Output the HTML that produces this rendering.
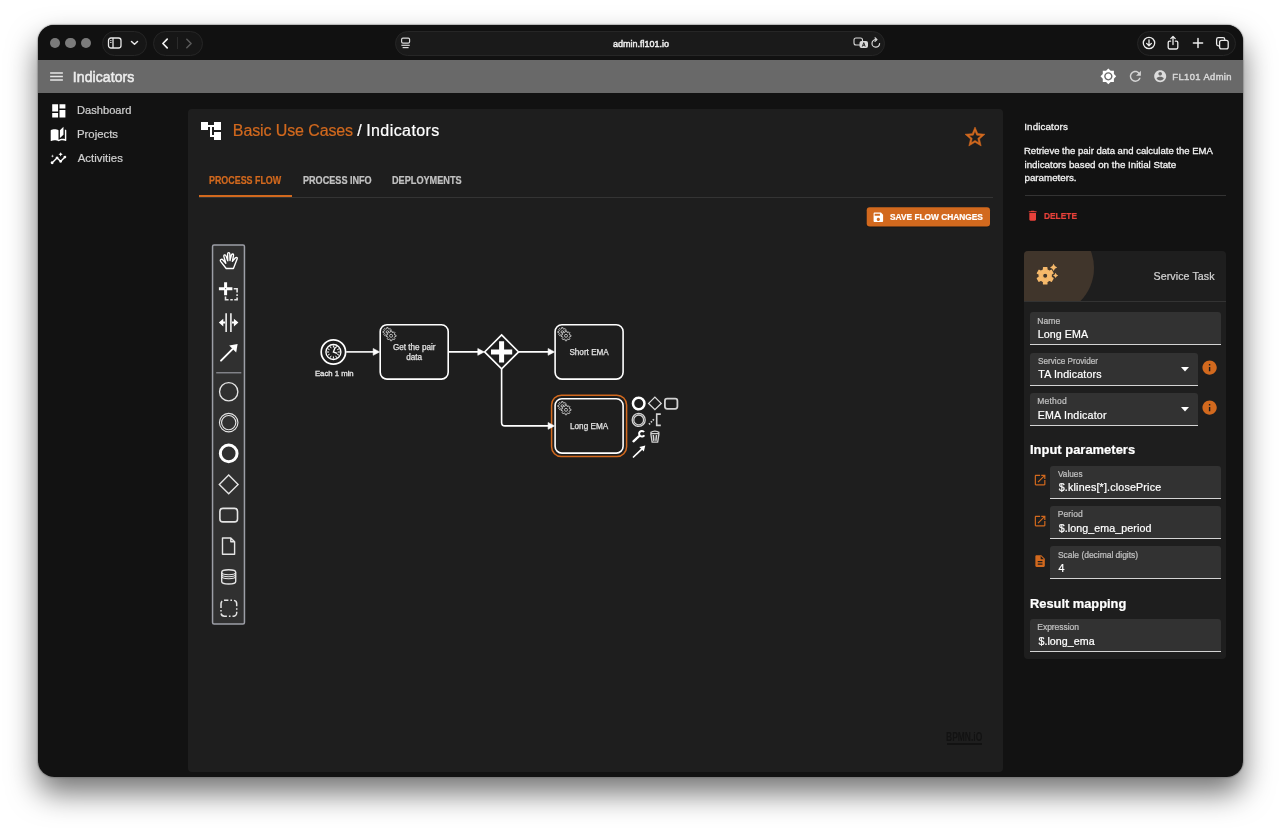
<!DOCTYPE html>
<html lang="en"><head><meta charset="utf-8"><title>Indicators</title>
<style>
html,body{margin:0;padding:0;background:#fff;}
body{width:1280px;height:828px;overflow:hidden;position:relative;font-family:"Liberation Sans",Arial,sans-serif;}
.t{position:absolute;white-space:nowrap;display:block;}
.i{position:absolute;display:block;overflow:visible;}
.b{position:absolute;box-sizing:border-box;}
#win{position:absolute;left:37.6px;top:25.3px;width:1205px;height:751.8px;border-radius:16px;background:#121212;overflow:hidden;}
#shadow{position:absolute;left:37.6px;top:25.3px;width:1205px;height:751.8px;border-radius:16px;box-shadow:0 0 0 0.6px rgba(150,150,150,.5),0 16px 30px rgba(0,0,0,.55),0 0 2px rgba(0,0,0,.6);}
#abs{position:absolute;left:0;top:0;width:1280px;height:828px;will-change:transform;}
</style></head><body>
<div id="shadow"></div>
<div id="win">
<div class="b" style="left:0;top:0;width:1206px;height:34.7px;background:#111111"></div>
<div class="b" style="left:0;top:34.7px;width:1206px;height:33px;background:#696969"></div>
</div>
<div id="abs">

<div class="b" style="left:49.8px;top:37.8px;width:10.4px;height:10.4px;border-radius:50%;background:#7b7b7b"></div>
<div class="b" style="left:65.3px;top:37.8px;width:10.4px;height:10.4px;border-radius:50%;background:#7b7b7b"></div>
<div class="b" style="left:80.8px;top:37.8px;width:10.4px;height:10.4px;border-radius:50%;background:#7b7b7b"></div>
<div class="b" style="left:102px;top:31px;width:45px;height:24.5px;border-radius:12.5px;background:#161616;border:1px solid #262626;"></div>
<div class="b" style="left:152.5px;top:31px;width:50px;height:24.5px;border-radius:12.5px;background:#161616;border:1px solid #262626;"></div>
<div class="b" style="left:395px;top:31px;width:489.8px;height:24.5px;border-radius:12.5px;background:#161616;border:1px solid #262626;background:#1a1a1a"></div>
<div class="b" style="left:1137px;top:31px;width:99px;height:24.5px;border-radius:12.5px;background:#161616;border:1px solid #262626;"></div>
<svg class="i" style="left:107.2px;top:36px" width="16" height="14" viewBox="0 0 16 14" fill="none" stroke="#e8e8e8" stroke-width="1.3"><rect x="1.5" y="2" width="12.5" height="10" rx="2.5"/><line x1="6" y1="2" x2="6" y2="12"/><line x1="3.2" y1="4.6" x2="4.5" y2="4.6" stroke-width="1"/><line x1="3.2" y1="6.5" x2="4.5" y2="6.5" stroke-width="1"/></svg>
<svg class="i" style="left:130px;top:40.4px" width="9" height="6" viewBox="0 0 9 6" fill="none" stroke="#e8e8e8" stroke-width="1.5" stroke-linecap="round" stroke-linejoin="round"><path d="M1.5 1.5 L4.5 4.3 L7.5 1.5"/></svg>
<svg class="i" style="left:160px;top:36.5px" width="10" height="13" viewBox="0 0 10 13" fill="none" stroke="#f2f2f2" stroke-width="1.7" stroke-linecap="round" stroke-linejoin="round"><path d="M7.2 2.200 L2.900 6.500 L7.200 10.800"/></svg>
<div class="b" style="left:177px;top:37px;width:1px;height:12px;background:#2c2c2c"></div>
<svg class="i" style="left:184px;top:36.5px" width="10" height="13" viewBox="0 0 10 13" fill="none" stroke="#5a5a5a" stroke-width="1.5" stroke-linecap="round" stroke-linejoin="round"><path d="M2.800 2.200 L7.100 6.500 L2.800 10.800"/></svg>
<svg class="i" style="left:400px;top:37px" width="12" height="12" viewBox="0 0 12 12" fill="none" stroke="#d8d8d8" stroke-width="1.2"><rect x="1.6" y="1.2" width="8" height="5" rx="1.4"/><line x1="1.4" y1="8.3" x2="9.8" y2="8.3"/><line x1="2.6" y1="10.6" x2="8.6" y2="10.6"/></svg>
<span class="t" style="left:612.77px;top:38px;font-size:9.6px;line-height:11px;color:#f0f0f0;transform:scaleX(0.9396);transform-origin:0 0;-webkit-text-stroke:0.45px #f0f0f0;">admin.fl101.io</span>
<svg class="i" style="left:853px;top:37px" width="16" height="12" viewBox="0 0 16 12"><rect x="1" y="1" width="8.5" height="7" rx="2" fill="none" stroke="#d8d8d8" stroke-width="1.1"/><rect x="6.5" y="4" width="8.5" height="7" rx="2" fill="#d8d8d8"/><path d="M9.300 9.600 L10.750 5.600 L12.200 9.600 M9.900 8.300 H11.600" fill="none" stroke="#1a1a1a" stroke-width="0.9"/></svg>
<svg class="i" style="left:869.6px;top:37px" width="12" height="12" viewBox="0 0 12 12" fill="none" stroke="#d8d8d8" stroke-width="1.2" stroke-linecap="round"><path d="M9.6 6.6 A3.8 3.8 0 1 1 6 2.6"/><path d="M5 0.8 L7 2.6 L5 4.4" stroke-linejoin="round"/></svg>
<svg class="i" style="left:1141.9px;top:36px" width="14" height="14" viewBox="0 0 14 14" fill="none" stroke="#ececec" stroke-width="1.3" stroke-linecap="round" stroke-linejoin="round"><circle cx="7" cy="7" r="5.7"/><path d="M7 3.8 V9.6 M4.6 7.4 L7 9.8 L9.4 7.4"/></svg>
<svg class="i" style="left:1165.7px;top:34.5px" width="14" height="16" viewBox="0 0 14 16" fill="none" stroke="#ececec" stroke-width="1.3" stroke-linecap="round" stroke-linejoin="round"><path d="M4.6 6.2 H3.6 Q2.2 6.2 2.2 7.6 V12.6 Q2.2 14 3.6 14 H10.4 Q11.800 14 11.8 12.6 V7.6 Q11.8 6.2 10.4 6.2 H9.4"/><path d="M7 9.6 V1.600 M4.800 3.600 L7 1.400 L9.200 3.600"/></svg>
<svg class="i" style="left:1192px;top:37px" width="12" height="12" viewBox="0 0 12 12" fill="none" stroke="#ececec" stroke-width="1.5" stroke-linecap="round"><path d="M6 1.400 V10.600 M1.400 6 H10.600"/></svg>
<svg class="i" style="left:1215px;top:36px" width="15" height="14" viewBox="0 0 15 14" fill="none" stroke="#ececec" stroke-width="1.3"><path d="M4.200 9.800 H3.400 Q1.600 9.800 1.600 8 V3.400 Q1.600 1.600 3.400 1.600 H8 Q9.800 1.600 9.800 3.400 V4.200"/><rect x="4.600" y="4.400" width="8.600" height="8.400" rx="1.900"/></svg>
<svg class="i" style="left:47.9px;top:67.85px" width="17" height="17" viewBox="0 0 24 24" fill="#e6e6e6" ><path d="M3 18h18v-2H3v2zm0-5h18v-2H3v2zm0-7v2h18V6H3z"/></svg>
<span class="t" style="left:72.86px;top:69px;font-size:14px;line-height:16px;color:#ececec;letter-spacing:0.078px;-webkit-text-stroke:0.55px #ececec;">Indicators</span>
<svg class="i" style="left:1099.55px;top:68.15px" width="16.7" height="16.7" viewBox="0 0 24 24" fill="#ffffff" ><path d="M20 8.690V4h-4.690L12 .690 8.690 4H4v4.690L.690 12 4 15.310V20h4.690L12 23.310 15.310 20H20v-4.690L23.310 12 20 8.690zM12 18c-3.310 0-6-2.690-6-6s2.690-6 6-6 6 2.690 6 6-2.690 6-6 6zm0-10c-2.210 0-4 1.790-4 4s1.790 4 4 4 4-1.790 4-4-1.790-4-4-4z"/></svg>
<svg class="i" style="left:1126.65px;top:68.05px" width="16.7" height="16.7" viewBox="0 0 24 24" fill="#d4d4d4" ><path d="M17.650 6.350C16.200 4.900 14.210 4 12 4c-4.420 0-7.990 3.580-7.990 8s3.570 8 7.990 8c3.730 0 6.840-2.550 7.730-6h-2.080c-.82 2.330-3.040 4-5.650 4-3.310 0-6-2.690-6-6s2.690-6 6-6c1.660 0 3.140.69 4.220 1.780L13 11h7V4l-2.350 2.350z"/></svg>
<svg class="i" style="left:1153px;top:69.3px" width="14.4" height="14.4" viewBox="0 0 24 24" fill="#dcdcdc" ><path d="M12 2C6.480 2 2 6.480 2 12s4.480 10 10 10 10-4.480 10-10S17.520 2 12 2zm0 3c1.660 0 3 1.340 3 3s-1.340 3-3 3-3-1.340-3-3 1.340-3 3-3zm0 14.200c-2.500 0-4.710-1.280-6-3.220.03-1.990 4-3.080 6-3.080 1.990 0 5.970 1.090 6 3.080-1.290 1.940-3.500 3.220-6 3.220z"/></svg>
<span class="t" style="left:1172.28px;top:71px;font-size:9.4px;line-height:11px;color:#d8d8d8;letter-spacing:0.407px;-webkit-text-stroke:0.45px #d8d8d8;">FL101 Admin</span>
<svg class="i" style="left:49.75px;top:101.65px" width="17.6" height="17.6" viewBox="0 0 24 24" fill="#ffffff" ><path d="M3 13h8V3H3v10zm0 8h8v-6H3v6zm10 0h8V11h-8v10zm0-18v6h8V3h-8z"/></svg>
<span class="t" style="left:76.94px;top:104px;font-size:11.4px;line-height:12px;color:#cfcfcf;transform:scaleX(0.9760);transform-origin:0 0;-webkit-text-stroke:0.22px #cfcfcf;">Dashboard</span>
<svg class="i" style="left:50.1px;top:126.4px" width="17" height="17" viewBox="0 0 24 24" fill="#ffffff" ><path d="M19 1l-5 5v11l5-4.500V1zM1 6v14.650c0 .250.250.500.500.500.100 0 .150-.050.250-.050C3.100 20.450 5.050 20 6.500 20c1.950 0 4.050.400 5.500 1.500V6c-1.450-1.100-3.550-1.500-5.500-1.500S2.450 4.900 1 6zm22 13.500V6c-.600-.450-1.250-.750-2-1v13.500c-1.100-.350-2.300-.500-3.500-.500-1.700 0-4.150.650-5.500 1.500v2c1.350-.850 3.800-1.500 5.500-1.500 1.650 0 3.350.300 4.750 1.050.100.050.150.050.250.050.250 0 .500-.250.500-.500v-1.100z"/></svg>
<span class="t" style="left:76.91px;top:128px;font-size:11.4px;line-height:12px;color:#cfcfcf;-webkit-text-stroke:0.22px #cfcfcf;">Projects</span>
<svg class="i" style="left:50.3px;top:150.2px" width="17" height="17" viewBox="0 0 24 24" fill="#ffffff" ><path d="M21 8c-1.450 0-2.260 1.440-1.930 2.510l-3.550 3.560c-.3-.09-.74-.09-1.040 0l-2.550-2.550C12.270 10.450 11.460 9 10 9c-1.450 0-2.270 1.440-1.930 2.520l-4.560 4.550C2.440 15.740 1 16.550 1 18c0 1.100.9 2 2 2 1.450 0 2.260-1.440 1.930-2.510l4.550-4.560c.3.090.74.090 1.040 0l2.550 2.550C12.730 16.550 13.540 18 15 18c1.450 0 2.270-1.440 1.930-2.520l3.560-3.550C21.560 12.260 23 11.450 23 10c0-1.100-.9-2-2-2z"/><path d="M15 9l.94-2.070L18 6l-2.060-.93L15 3l-.92 2.070L12 6l2.080.93z"/><path d="M3.500 11L4 9l2-.5L4 8l-.5-2L3 8l-2 .5L3 9z"/></svg>
<span class="t" style="left:77.63px;top:152px;font-size:11.4px;line-height:12px;color:#cfcfcf;letter-spacing:0.040px;-webkit-text-stroke:0.22px #cfcfcf;">Activities</span>
<div class="b" style="left:188px;top:109px;width:815px;height:663px;border-radius:4px;background:#1e1e1e"></div>
<svg class="i" style="left:199px;top:119px" width="24" height="24" viewBox="0 0 24 24" fill="#ffffff" ><path d="M22 11V3h-7v3H9V3H2v8h7V8h2v10h4v3h7v-8h-7v3h-2V8h2v3z"/></svg>
<span class="t" style="left:232.84px;top:122px;font-size:16px;line-height:17px;color:#d2691e;letter-spacing:-0.109px;-webkit-text-stroke:0.22px #d2691e;">Basic Use Cases</span>
<span class="t" style="left:357.25px;top:122px;font-size:16px;line-height:17px;color:#ffffff;-webkit-text-stroke:0.22px #ffffff;">/</span>
<span class="t" style="left:366.17px;top:122px;font-size:16px;line-height:17px;color:#ffffff;letter-spacing:0.421px;-webkit-text-stroke:0.22px #ffffff;">Indicators</span>
<svg class="i" style="left:963.2px;top:125px" width="24" height="24" viewBox="0 0 24 24" fill="#d2691e" stroke="#d2691e" stroke-width="0.5"><path d="M22 9.24l-7.19-.62L12 2 9.19 8.63 2 9.24l5.46 4.73L5.82 21 12 17.27 18.18 21l-1.63-7.03L22 9.24zM12 15.4l-3.76 2.27 1-4.28-3.32-2.88 4.38-.38L12 6.1l1.710 4.040 4.380.380-3.320 2.880 1 4.280L12 15.400z"/></svg>
<span class="t" style="left:209.25px;top:175px;font-size:10.3px;line-height:11px;color:#d2691e;font-weight:700;transform:scaleX(0.8642);transform-origin:0 0;-webkit-text-stroke:0.22px #d2691e;">PROCESS FLOW</span>
<span class="t" style="left:302.54px;top:175px;font-size:10.3px;line-height:11px;color:#c2c2c2;font-weight:700;transform:scaleX(0.8825);transform-origin:0 0;-webkit-text-stroke:0.22px #c2c2c2;">PROCESS INFO</span>
<span class="t" style="left:391.64px;top:175px;font-size:10.3px;line-height:11px;color:#c2c2c2;font-weight:700;transform:scaleX(0.8886);transform-origin:0 0;-webkit-text-stroke:0.22px #c2c2c2;">DEPLOYMENTS</span>
<div class="b" style="left:199px;top:196.500px;width:793.500px;height:1px;background:#343434"></div>
<div class="b" style="left:199px;top:195.300px;width:93.300px;height:2px;background:#d2691e"></div>
<svg class="i" style="left:860px;top:200px" width="140" height="34" viewBox="860 200 140 34"><rect x="866.7" y="207.8" width="123.3" height="19.4" rx="3" fill="#0c0c0c" opacity=".55"/><rect x="866.7" y="207.3" width="123.3" height="19.2" rx="3" fill="#d2691e"/></svg>
<svg class="i" style="left:872.35px;top:210.7px" width="12.7" height="12.7" viewBox="0 0 24 24" fill="#ffffff" ><path d="M17 3H5c-1.110 0-2 .9-2 2v14c0 1.100.89 2 2 2h14c1.100 0 2-.9 2-2V7l-4-4zm-5 16c-1.660 0-3-1.340-3-3s1.340-3 3-3 3 1.340 3 3-1.340 3-3 3zm3-10H5V5h10v4z"/></svg>
<span class="t" style="left:889.91px;top:212px;font-size:9.3px;line-height:10px;color:#ffffff;font-weight:700;transform:scaleX(0.8965);transform-origin:0 0;-webkit-text-stroke:0.22px #ffffff;">SAVE FLOW CHANGES</span>
<span class="t" style="left:946.48px;top:729px;font-size:13.5px;line-height:15px;color:#121212;font-weight:700;transform:scaleX(0.6290);transform-origin:0 0;">BPMN.iO</span>
<div class="b" style="left:946.7px;top:743.2px;width:35.4px;height:1.6px;background:#121212"></div>
<svg class="i" style="left:0;top:0" width="1280" height="828" viewBox="0 0 1280 828"><rect x="212.55" y="244.95" width="31.9" height="379" rx="1.5" fill="#303030" stroke="#9c9ea6" stroke-width="1.5"/><path d="M216.2 372.8 H241.3" stroke="#9c9ea6" stroke-width="1.1" fill="none"/><path fill="none" stroke="#ffffff" stroke-width="1.35" stroke-linejoin="round" stroke-linecap="round" d="M226.200 268.500 L220.800 261.600 Q219.800 260.200 220.900 259.500 Q222 258.900 223 260 L225.800 263.200 L223.900 256.600 Q223.600 255.200 224.600 254.900 Q225.700 254.700 226.100 256 L227.800 260.800 L227.600 254 Q227.600 252.600 228.700 252.600 Q229.800 252.600 229.800 254 L230 260.600 L231.400 255 Q231.800 253.700 232.800 254 Q233.800 254.300 233.500 255.700 L232.400 261.400 L235.200 258 Q236.100 257 236.900 257.600 Q237.600 258.300 236.900 259.500 L233.400 268.500 Z"/><path d="M225.6 282.2 V295.300 M218.900 288.700 H232.400" stroke="#ffffff" stroke-width="3" fill="none"/><rect x="225.1" y="288.2" width="1" height="1" fill="#444"/><path d="M233.700 288.700 H237.100 V292.400 M237.100 294.300 V296 M237.100 297.400 V299.700 H234.300 M232.800 299.700 H230.300 M228.600 299.700 H225.500 V296.400" stroke="#e4e4e4" stroke-width="1.6" fill="none"/><path d="M226.150 313.200 V332 M230.900 313.200 V332" stroke="#e4e4e4" stroke-width="1.7" fill="none"/><path fill="#ffffff" d="M218.800 322.600 L223.300 318.700 V321.600 H225.200 V323.600 H223.300 V326.500 Z M238.400 322.600 L233.900 318.700 V321.600 H232 V323.600 H233.900 V326.500 Z"/><path d="M221 360.700 L232.500 349.200" stroke="#ffffff" stroke-width="1.9" stroke-linecap="round" fill="none"/><path fill="#ffffff" d="M237.600 344.100 L236.200 352.600 L229.200 345.600 Z"/><circle cx="228.7" cy="391.750" r="9.150" fill="none" stroke="#e4e4e4" stroke-width="1.35"/><circle cx="228.7" cy="422.600" r="9.250" fill="none" stroke="#e4e4e4" stroke-width="1.15"/><circle cx="228.7" cy="422.600" r="7.150" fill="none" stroke="#e4e4e4" stroke-width="1.15"/><circle cx="228.7" cy="453.400" r="8.350" fill="none" stroke="#ffffff" stroke-width="3"/><path d="M228.7 475 L238.1 484.400 L228.7 493.800 L219.29999999999998 484.400 Z" fill="none" stroke="#e4e4e4" stroke-width="1.4"/><rect x="219.900" y="508.400" width="17.600" height="13.500" rx="3" fill="none" stroke="#e4e4e4" stroke-width="1.6"/><path d="M222.500 538 H230.800 L234.600 541.800 V554.300 H222.500 Z M230.800 538 V541.800 H234.600" fill="none" stroke="#e4e4e4" stroke-width="1.4" stroke-linejoin="round"/><path d="M221.700 572.300 Q221.700 569.800 228.700 569.800 Q235.700 569.800 235.700 572.300 V581.500 Q235.700 584 228.700 584 Q221.700 584 221.700 581.500 Z" fill="none" stroke="#e4e4e4" stroke-width="1.4"/><path d="M221.700 572.300 Q221.700 574.800 228.700 574.800 Q235.700 574.800 235.700 572.300 M221.700 574.300 Q221.700 576.800 228.700 576.800 Q235.700 576.800 235.700 574.300 M221.700 576.300 Q221.700 578.800 228.700 578.800 Q235.700 578.800 235.700 576.300" fill="none" stroke="#e4e4e4" stroke-width="1.1"/><rect x="221" y="600.300" width="15.700" height="15.900" rx="3.400" fill="none" stroke="#e4e4e4" stroke-width="1.5" stroke-dasharray="7 2 1.600 2" stroke-dashoffset="3"/></svg>
<svg class="i" style="left:0;top:0" width="1280" height="828" viewBox="0 0 1280 828" font-family="Liberation Sans, Arial, sans-serif"><circle cx="333.4" cy="352" r="12.2" fill="#1e1e1e" stroke="#ffffff" stroke-width="1.7"/><circle cx="333.4" cy="352" r="7.5" fill="#1e1e1e" stroke="#ffffff" stroke-width="1.35"/><line x1="337.80" y1="352.00" x2="340.00" y2="352.00" stroke="#ffffff" stroke-width="1"/><line x1="337.21" y1="354.20" x2="339.12" y2="355.30" stroke="#ffffff" stroke-width="1"/><line x1="335.60" y1="355.81" x2="336.70" y2="357.72" stroke="#ffffff" stroke-width="1"/><line x1="333.40" y1="356.40" x2="333.40" y2="358.60" stroke="#ffffff" stroke-width="1"/><line x1="331.20" y1="355.81" x2="330.10" y2="357.72" stroke="#ffffff" stroke-width="1"/><line x1="329.59" y1="354.20" x2="327.68" y2="355.30" stroke="#ffffff" stroke-width="1"/><line x1="329.00" y1="352.00" x2="326.80" y2="352.00" stroke="#ffffff" stroke-width="1"/><line x1="329.59" y1="349.80" x2="327.68" y2="348.70" stroke="#ffffff" stroke-width="1"/><line x1="331.20" y1="348.19" x2="330.10" y2="346.28" stroke="#ffffff" stroke-width="1"/><line x1="333.40" y1="347.60" x2="333.40" y2="345.40" stroke="#ffffff" stroke-width="1"/><line x1="335.60" y1="348.19" x2="336.70" y2="346.28" stroke="#ffffff" stroke-width="1"/><line x1="337.21" y1="349.80" x2="339.12" y2="348.70" stroke="#ffffff" stroke-width="1"/><path d="M333.4 352 L335.09999999999997 347.4 M333.4 352 L336.59999999999997 353.1" stroke="#ffffff" stroke-width="1.35" fill="none" stroke-linecap="square"/><text x="334.3" y="375.8" text-anchor="middle" font-size="7.75" fill="#e6e6e6" stroke="#e6e6e6" stroke-width="0.3">Each 1 min</text><rect x="380.20" y="324.70" width="68" height="54.4" rx="6.8" fill="#1e1e1e" stroke="#ffffff" stroke-width="1.6"/><path d="M390.61 331.23 L391.86 331.37 L391.86 332.63 L390.61 332.77 L390.21 333.72 L391.00 334.70 L390.10 335.60 L389.12 334.81 L388.17 335.21 L388.03 336.46 L386.77 336.46 L386.63 335.21 L385.68 334.81 L384.70 335.60 L383.80 334.70 L384.59 333.72 L384.19 332.77 L382.94 332.63 L382.94 331.37 L384.19 331.23 L384.59 330.28 L383.80 329.30 L384.70 328.40 L385.68 329.19 L386.63 328.79 L386.77 327.54 L388.03 327.54 L388.17 328.79 L389.12 329.19 L390.10 328.40 L391.00 329.30 L390.21 330.28 Z" fill="#1e1e1e" stroke="#e4e4e4" stroke-width="0.75" stroke-linejoin="round"/><circle cx="387.40" cy="332.00" r="1.3" fill="#1e1e1e" stroke="#e4e4e4" stroke-width="0.75"/><path d="M394.70 334.94 L396.05 335.10 L396.05 336.50 L394.70 336.66 L394.25 337.73 L395.10 338.80 L394.10 339.80 L393.03 338.95 L391.96 339.40 L391.80 340.75 L390.40 340.75 L390.24 339.40 L389.17 338.95 L388.10 339.80 L387.10 338.80 L387.95 337.73 L387.50 336.66 L386.15 336.50 L386.15 335.10 L387.50 334.94 L387.95 333.87 L387.10 332.80 L388.10 331.80 L389.17 332.65 L390.24 332.20 L390.40 330.85 L391.80 330.85 L391.96 332.20 L393.03 332.65 L394.10 331.80 L395.10 332.80 L394.25 333.87 Z" fill="#1e1e1e" stroke="#e4e4e4" stroke-width="0.75" stroke-linejoin="round"/><circle cx="391.10" cy="335.80" r="1.5" fill="#1e1e1e" stroke="#e4e4e4" stroke-width="0.75"/><text x="414.20" y="350.05" text-anchor="middle" font-size="8.16" fill="#e2e2e2" stroke="#e2e2e2" stroke-width="0.25">Get the pair</text><text x="414.20" y="359.55" text-anchor="middle" font-size="8.16" fill="#e2e2e2" stroke="#e2e2e2" stroke-width="0.25">data</text><rect x="555.10" y="324.70" width="68" height="54.4" rx="6.8" fill="#1e1e1e" stroke="#ffffff" stroke-width="1.6"/><path d="M565.51 331.23 L566.76 331.37 L566.76 332.63 L565.51 332.77 L565.11 333.72 L565.90 334.70 L565.00 335.60 L564.02 334.81 L563.07 335.21 L562.93 336.46 L561.67 336.46 L561.53 335.21 L560.58 334.81 L559.60 335.60 L558.70 334.70 L559.49 333.72 L559.09 332.77 L557.84 332.63 L557.84 331.37 L559.09 331.23 L559.49 330.28 L558.70 329.30 L559.60 328.40 L560.58 329.19 L561.53 328.79 L561.67 327.54 L562.93 327.54 L563.07 328.79 L564.02 329.19 L565.00 328.40 L565.90 329.30 L565.11 330.28 Z" fill="#1e1e1e" stroke="#e4e4e4" stroke-width="0.75" stroke-linejoin="round"/><circle cx="562.30" cy="332.00" r="1.3" fill="#1e1e1e" stroke="#e4e4e4" stroke-width="0.75"/><path d="M569.60 334.94 L570.95 335.10 L570.95 336.50 L569.60 336.66 L569.15 337.73 L570.00 338.80 L569.00 339.80 L567.93 338.95 L566.86 339.40 L566.70 340.75 L565.30 340.75 L565.14 339.40 L564.07 338.95 L563.00 339.80 L562.00 338.80 L562.85 337.73 L562.40 336.66 L561.05 336.50 L561.05 335.10 L562.40 334.94 L562.85 333.87 L562.00 332.80 L563.00 331.80 L564.07 332.65 L565.14 332.20 L565.30 330.85 L566.70 330.85 L566.86 332.20 L567.93 332.65 L569.00 331.80 L570.00 332.80 L569.15 333.87 Z" fill="#1e1e1e" stroke="#e4e4e4" stroke-width="0.75" stroke-linejoin="round"/><circle cx="566.00" cy="335.80" r="1.5" fill="#1e1e1e" stroke="#e4e4e4" stroke-width="0.75"/><text x="589.10" y="354.80" text-anchor="middle" font-size="8.16" fill="#e2e2e2" stroke="#e2e2e2" stroke-width="0.25">Short EMA</text><rect x="551.60" y="395.20" width="75.00" height="61.40" rx="9.8" fill="none" stroke="#d2691e" stroke-width="1.5"/><rect x="555.10" y="398.70" width="68" height="54.4" rx="6.8" fill="#1e1e1e" stroke="#ffffff" stroke-width="1.6"/><path d="M565.51 405.23 L566.76 405.37 L566.76 406.63 L565.51 406.77 L565.11 407.72 L565.90 408.70 L565.00 409.60 L564.02 408.81 L563.07 409.21 L562.93 410.46 L561.67 410.46 L561.53 409.21 L560.58 408.81 L559.60 409.60 L558.70 408.70 L559.49 407.72 L559.09 406.77 L557.84 406.63 L557.84 405.37 L559.09 405.23 L559.49 404.28 L558.70 403.30 L559.60 402.40 L560.58 403.19 L561.53 402.79 L561.67 401.54 L562.93 401.54 L563.07 402.79 L564.02 403.19 L565.00 402.40 L565.90 403.30 L565.11 404.28 Z" fill="#1e1e1e" stroke="#e4e4e4" stroke-width="0.75" stroke-linejoin="round"/><circle cx="562.30" cy="406.00" r="1.3" fill="#1e1e1e" stroke="#e4e4e4" stroke-width="0.75"/><path d="M569.60 408.94 L570.95 409.10 L570.95 410.50 L569.60 410.66 L569.15 411.73 L570.00 412.80 L569.00 413.80 L567.93 412.95 L566.86 413.40 L566.70 414.75 L565.30 414.75 L565.14 413.40 L564.07 412.95 L563.00 413.80 L562.00 412.80 L562.85 411.73 L562.40 410.66 L561.05 410.50 L561.05 409.10 L562.40 408.94 L562.85 407.87 L562.00 406.80 L563.00 405.80 L564.07 406.65 L565.14 406.20 L565.30 404.85 L566.70 404.85 L566.86 406.20 L567.93 406.65 L569.00 405.80 L570.00 406.80 L569.15 407.87 Z" fill="#1e1e1e" stroke="#e4e4e4" stroke-width="0.75" stroke-linejoin="round"/><circle cx="566.00" cy="409.80" r="1.5" fill="#1e1e1e" stroke="#e4e4e4" stroke-width="0.75"/><text x="589.10" y="428.80" text-anchor="middle" font-size="8.16" fill="#e2e2e2" stroke="#e2e2e2" stroke-width="0.25">Long EMA</text><path d="M346.20 351.90 L375.60 351.90" fill="none" stroke="#ffffff" stroke-width="1.6" stroke-linejoin="round"/><path d="M379.60 351.90 L373.20 355.30 L373.20 348.50 Z" fill="#ffffff" stroke="#ffffff" stroke-width="0.6" stroke-linejoin="round"/><path d="M448.80 351.90 L480.20 351.90" fill="none" stroke="#ffffff" stroke-width="1.6" stroke-linejoin="round"/><path d="M484.20 351.90 L477.80 355.30 L477.80 348.50 Z" fill="#ffffff" stroke="#ffffff" stroke-width="0.6" stroke-linejoin="round"/><path d="M518.80 351.90 L550.50 351.90" fill="none" stroke="#ffffff" stroke-width="1.6" stroke-linejoin="round"/><path d="M554.50 351.90 L548.10 355.30 L548.10 348.50 Z" fill="#ffffff" stroke="#ffffff" stroke-width="0.6" stroke-linejoin="round"/><path d="M501.60 369.00 L501.60 422.50 Q501.60 425.90 505.00 425.90 L550.50 425.90" fill="none" stroke="#ffffff" stroke-width="1.6" stroke-linejoin="round"/><path d="M554.50 425.90 L548.10 429.30 L548.10 422.50 Z" fill="#ffffff" stroke="#ffffff" stroke-width="0.6" stroke-linejoin="round"/><path d="M501.6 334.9 L518.6 351.9 L501.6 368.9 L484.6 351.9 Z" fill="#1e1e1e" stroke="#ffffff" stroke-width="1.6" stroke-linejoin="miter"/><path d="M499.1 341.29999999999995 h5.0 v8.1 h8.1 v5.0 h-8.1 v8.1 h-5.0 v-8.1 h-8.1 v-5.0 h8.1 Z" fill="#ffffff"/><circle cx="638.7" cy="403.5" r="5.75" fill="none" stroke="#ffffff" stroke-width="2.5"/><path d="M654.9 397.1 L661.2 403.4 L654.9 409.7 L648.6 403.4 Z" fill="none" stroke="#dcdcdc" stroke-width="1.3"/><rect x="664.9" y="398.7" width="12.5" height="10.1" rx="2.2" fill="none" stroke="#d2d2d2" stroke-width="1.8"/><circle cx="638.7" cy="419.9" r="6.5" fill="none" stroke="#d2d2d2" stroke-width="1.3"/><circle cx="638.7" cy="419.9" r="4.9" fill="none" stroke="#d2d2d2" stroke-width="1.3"/><path d="M649 424.4 L654.6 418.4" fill="none" stroke="#d2d2d2" stroke-width="1.7" stroke-dasharray="1.5 1.3"/><path d="M660.8 414.1 H656.7 V425.4 H660.800" fill="none" stroke="#d2d2d2" stroke-width="1.6"/><path d="M633.500 441.300 L638.800 436.400" fill="none" stroke="#ffffff" stroke-width="2.300" stroke-linecap="round"/><path d="M644.100 432 A2.800 2.800 0 1 0 644.300 435.200" fill="none" stroke="#ffffff" stroke-width="2"/><path d="M650.400 432.600 Q654.900 429.600 659.400 432.600 M650.800 433.600 L652.100 442.100 H657.700 L659 433.600 Z" fill="none" stroke="#d2d2d2" stroke-width="1.300" stroke-linejoin="round"/><path d="M653.300 435 L653.900 440.800 M656.500 435 L655.900 440.800" fill="none" stroke="#d2d2d2" stroke-width="1.500"/><path d="M633.500 457 L641.500 449.300" fill="none" stroke="#ffffff" stroke-width="1.700" stroke-linecap="round"/><path d="M645.300 445.600 L643.800 451.500 L639.300 447.100 Z" fill="#ffffff"/></svg>
<span class="t" style="left:1024.25px;top:121px;font-size:9.8px;line-height:11px;color:#f2f2f2;letter-spacing:0.119px;-webkit-text-stroke:0.22px #f2f2f2;-webkit-text-stroke:0.3px #f2f2f2;">Indicators</span>
<span class="t" style="left:1024.37px;top:145px;font-size:9.8px;line-height:11px;color:#f2f2f2;transform:scaleX(0.9713);transform-origin:0 0;-webkit-text-stroke:0.22px #f2f2f2;-webkit-text-stroke:0.3px #f2f2f2;">Retrieve the pair data and calculate the EMA</span>
<span class="t" style="left:1024.49px;top:159px;font-size:9.8px;line-height:11px;color:#f2f2f2;letter-spacing:-0.021px;-webkit-text-stroke:0.22px #f2f2f2;-webkit-text-stroke:0.3px #f2f2f2;">indicators based on the Initial State</span>
<span class="t" style="left:1024.52px;top:172px;font-size:9.8px;line-height:11px;color:#f2f2f2;letter-spacing:-0.026px;-webkit-text-stroke:0.22px #f2f2f2;-webkit-text-stroke:0.3px #f2f2f2;">parameters.</span>
<div class="b" style="left:1024.5px;top:195px;width:201.500px;height:1px;background:#333"></div>
<svg class="i" style="left:1025.9px;top:209px" width="13.33" height="13.33" viewBox="0 0 24 24" fill="#e8413a" ><path d="M6 19c0 1.100.9 2 2 2h8c1.100 0 2-.9 2-2V7H6v12zM19 4h-3.500l-1-1h-5l-1 1H5v2h14V4z"/></svg>
<span class="t" style="left:1043.89px;top:210px;font-size:9.5px;line-height:11px;color:#e8413a;font-weight:700;transform:scaleX(0.8802);transform-origin:0 0;-webkit-text-stroke:0.22px #e8413a;">DELETE</span>
<div class="b" style="left:1024.400px;top:251px;width:201.800px;height:408px;border-radius:4px;background:#1e1e1e;overflow:hidden"><div class="b" style="left:0;top:0;width:202px;height:50px;overflow:hidden"><div class="b" style="left:-24.400px;top:-30px;width:94px;height:94px;border-radius:50%;background:#40352b"></div></div><div class="b" style="left:0;top:50px;width:202px;height:1px;background:#333"></div></div>
<svg class="i" style="left:0;top:0" width="1280" height="828" viewBox="0 0 1280 828"><path fill="#f6b96b" fill-rule="evenodd" stroke="#f6b96b" stroke-width="1.2" stroke-linejoin="round" d="M1051.22 277.28 L1053.09 278.36 L1051.37 281.35 L1049.49 280.27 L1046.93 281.75 L1046.93 283.92 L1043.47 283.92 L1043.47 281.75 L1040.91 280.27 L1039.03 281.35 L1037.31 278.36 L1039.18 277.28 L1039.18 274.32 L1037.31 273.24 L1039.03 270.25 L1040.91 271.33 L1043.47 269.85 L1043.47 267.68 L1046.93 267.68 L1046.93 269.85 L1049.49 271.33 L1051.37 270.25 L1053.09 273.24 L1051.22 274.32 Z M1047.80 275.80 A2.6 2.6 0 1 0 1042.60 275.80 A2.6 2.6 0 1 0 1047.80 275.80 Z"/><path fill="#f6b96b" d="M1053.6 263.79999999999995 Q1054.3919999999998 266.608 1057.1999999999998 267.4 Q1054.3919999999998 268.19199999999995 1053.6 271.0 Q1052.808 268.19199999999995 1050.0 267.4 Q1052.808 266.608 1053.6 263.79999999999995 Z"/><path fill="#f6b96b" d="M1055.6 272.79999999999995 Q1056.1719999999998 274.828 1058.1999999999998 275.4 Q1056.1719999999998 275.972 1055.6 278.0 Q1055.028 275.972 1053.0 275.4 Q1055.028 274.828 1055.6 272.79999999999995 Z"/></svg>
<span class="t" style="left:1153.57px;top:270px;font-size:10.67px;line-height:12px;color:#d2d2d2;letter-spacing:0.064px;-webkit-text-stroke:0.22px #d2d2d2;">Service Task</span>
<div class="b" style="left:1029.8px;top:312.3px;width:191.6px;height:32.9px;border-radius:3px 3px 0 0;background:#323232;border-bottom:1px solid #d4d4d4"></div>
<span class="t" style="left:1037.35px;top:316px;font-size:8.5px;line-height:10px;color:#c0c0c0;letter-spacing:0.067px;-webkit-text-stroke:0.22px #c0c0c0;">Name</span>
<span class="t" style="left:1037.67px;top:328px;font-size:10.67px;line-height:12px;color:#ffffff;letter-spacing:0.096px;-webkit-text-stroke:0.22px #ffffff;">Long EMA</span>
<div class="b" style="left:1029.8px;top:352.7px;width:168.2px;height:32.9px;border-radius:3px 3px 0 0;background:#323232;border-bottom:1px solid #d4d4d4"></div>
<span class="t" style="left:1037.68px;top:356px;font-size:8.5px;line-height:10px;color:#c0c0c0;transform:scaleX(0.9623);transform-origin:0 0;-webkit-text-stroke:0.22px #c0c0c0;">Service Provider</span>
<span class="t" style="left:1038.31px;top:368px;font-size:10.67px;line-height:12px;color:#ffffff;letter-spacing:0.156px;-webkit-text-stroke:0.22px #ffffff;">TA Indicators</span>
<div class="b" style="left:1029.8px;top:392.8px;width:168.2px;height:32.9px;border-radius:3px 3px 0 0;background:#323232;border-bottom:1px solid #d4d4d4"></div>
<span class="t" style="left:1037.35px;top:396px;font-size:8.5px;line-height:10px;color:#c0c0c0;letter-spacing:0.199px;-webkit-text-stroke:0.22px #c0c0c0;">Method</span>
<span class="t" style="left:1037.67px;top:409px;font-size:10.67px;line-height:12px;color:#ffffff;letter-spacing:0.212px;-webkit-text-stroke:0.22px #ffffff;">EMA Indicator</span>
<svg class="i" style="left:1181.300px;top:366.7px" width="8" height="5" viewBox="0 0 8 5"><path d="M0 0 L8 0 L4 4.400 Z" fill="#fff"/></svg>
<div class="b" style="left:1205.5px;top:363.55px;width:8px;height:8px;background:#1e1e1e"></div>
<svg class="i" style="left:1200.85px;top:358.95px" width="17.2" height="17.2" viewBox="0 0 24 24" fill="#d2691e" ><path d="M12 2C6.480 2 2 6.480 2 12s4.480 10 10 10 10-4.480 10-10S17.520 2 12 2zm1 15h-2v-6h2v6zm0-8h-2V7h2v2z"/></svg>
<svg class="i" style="left:1181.300px;top:406.79999999999995px" width="8" height="5" viewBox="0 0 8 5"><path d="M0 0 L8 0 L4 4.400 Z" fill="#fff"/></svg>
<div class="b" style="left:1205.5px;top:403.65px;width:8px;height:8px;background:#1e1e1e"></div>
<svg class="i" style="left:1200.85px;top:399.04999999999995px" width="17.2" height="17.2" viewBox="0 0 24 24" fill="#d2691e" ><path d="M12 2C6.480 2 2 6.480 2 12s4.480 10 10 10 10-4.480 10-10S17.520 2 12 2zm1 15h-2v-6h2v6zm0-8h-2V7h2v2z"/></svg>
<span class="t" style="left:1029.78px;top:442px;font-size:13.33px;line-height:15px;color:#ffffff;font-weight:700;transform:scaleX(0.9718);transform-origin:0 0;-webkit-text-stroke:0.22px #ffffff;">Input parameters</span>
<div class="b" style="left:1050.1px;top:465.7px;width:171.1px;height:32.9px;border-radius:3px 3px 0 0;background:#323232;border-bottom:1px solid #d4d4d4"></div>
<span class="t" style="left:1058.31px;top:469px;font-size:8.5px;line-height:10px;color:#c0c0c0;transform:scaleX(0.9670);transform-origin:0 0;-webkit-text-stroke:0.22px #c0c0c0;">Values</span>
<span class="t" style="left:1058.74px;top:481px;font-size:10.67px;line-height:12px;color:#ffffff;letter-spacing:0.193px;-webkit-text-stroke:0.22px #ffffff;">$.klines[*].closePrice</span>
<div class="b" style="left:1050.1px;top:506.2px;width:171.1px;height:32.9px;border-radius:3px 3px 0 0;background:#323232;border-bottom:1px solid #d4d4d4"></div>
<span class="t" style="left:1057.65px;top:509px;font-size:8.5px;line-height:10px;color:#c0c0c0;letter-spacing:0.095px;-webkit-text-stroke:0.22px #c0c0c0;">Period</span>
<span class="t" style="left:1058.74px;top:522px;font-size:10.67px;line-height:12px;color:#ffffff;letter-spacing:0.084px;-webkit-text-stroke:0.22px #ffffff;">$.long_ema_period</span>
<div class="b" style="left:1050.1px;top:546.2px;width:171.1px;height:32.9px;border-radius:3px 3px 0 0;background:#323232;border-bottom:1px solid #d4d4d4"></div>
<span class="t" style="left:1057.96px;top:550px;font-size:8.5px;line-height:10px;color:#c0c0c0;letter-spacing:-0.032px;-webkit-text-stroke:0.22px #c0c0c0;">Scale (decimal digits)</span>
<span class="t" style="left:1058.61px;top:562px;font-size:10.67px;line-height:12px;color:#ffffff;-webkit-text-stroke:0.22px #ffffff;">4</span>
<svg class="i" style="left:1032.9px;top:473.2px" width="14.2" height="14.2" viewBox="0 0 24 24" fill="#d2691e" ><path d="M19 19H5V5h7V3H5c-1.110 0-2 .9-2 2v14c0 1.100.89 2 2 2h14c1.100 0 2-.9 2-2v-7h-2v7zM14 3v2h3.590l-9.830 9.830 1.410 1.410L19 6.410V10h2V3h-7z"/></svg>
<svg class="i" style="left:1032.9px;top:513.8px" width="14.2" height="14.2" viewBox="0 0 24 24" fill="#d2691e" ><path d="M19 19H5V5h7V3H5c-1.110 0-2 .9-2 2v14c0 1.100.89 2 2 2h14c1.100 0 2-.9 2-2v-7h-2v7zM14 3v2h3.590l-9.830 9.830 1.410 1.410L19 6.410V10h2V3h-7z"/></svg>
<svg class="i" style="left:1033px;top:553.95px" width="14.2" height="14.2" viewBox="0 0 24 24" fill="#d2691e" ><path d="M14 2H6c-1.100 0-1.990.9-1.990 2L4 20c0 1.100.89 2 1.990 2H18c1.100 0 2-.9 2-2V8l-6-6zm2 16H8v-2h8v2zm0-4H8v-2h8v2zm-3-5V3.500L18.500 9H13z"/></svg>
<span class="t" style="left:1029.79px;top:596px;font-size:13.33px;line-height:15px;color:#ffffff;font-weight:700;transform:scaleX(0.9634);transform-origin:0 0;-webkit-text-stroke:0.22px #ffffff;">Result mapping</span>
<div class="b" style="left:1029.8px;top:619.1px;width:191.4px;height:32.9px;border-radius:3px 3px 0 0;background:#323232;border-bottom:1px solid #d4d4d4"></div>
<span class="t" style="left:1037.35px;top:622px;font-size:8.5px;line-height:10px;color:#c0c0c0;letter-spacing:-0.055px;-webkit-text-stroke:0.22px #c0c0c0;">Expression</span>
<span class="t" style="left:1038.44px;top:635px;font-size:10.67px;line-height:12px;color:#ffffff;letter-spacing:0.050px;-webkit-text-stroke:0.22px #ffffff;">$.long_ema</span>
</div></body></html>
